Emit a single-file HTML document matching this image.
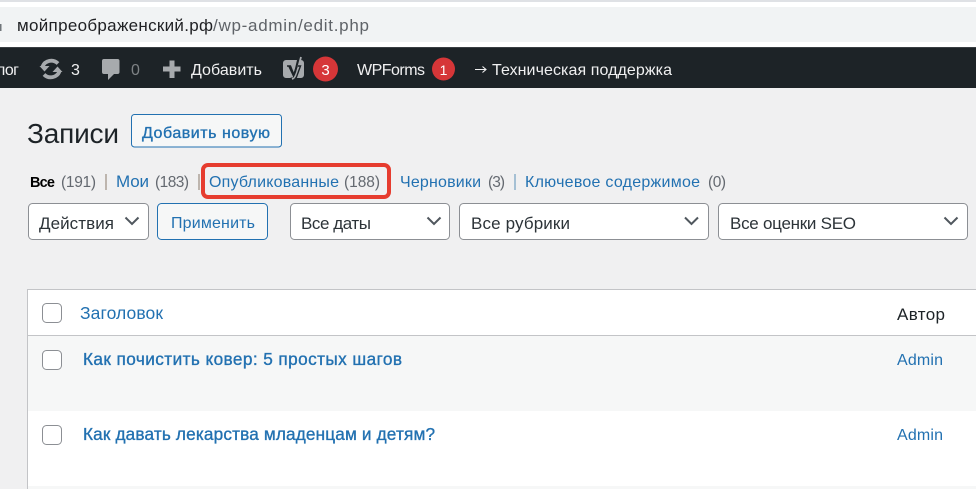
<!DOCTYPE html>
<html lang="ru"><head><meta charset="utf-8"><title>Записи</title>
<style>
html,body{margin:0;padding:0;width:976px;height:489px;overflow:hidden;background:#f0f0f1}
svg{display:block;position:absolute;left:0;top:0}
text{font-family:"Liberation Sans","DejaVu Sans",sans-serif;white-space:pre}
.bar{font-size:16px;fill:#f0f0f1}
.lnk{font-size:16px;fill:#2271b1}
.cnt{font-size:15.5px;fill:#646970}
.sel{font-size:17px;fill:#2c3338}
.ttl{font-size:17.2px;fill:#2271b1;stroke:#2271b1;stroke-width:.35}
</style></head><body>
<svg width="976" height="489" viewBox="0 0 976 489" xmlns="http://www.w3.org/2000/svg">
<rect width="976" height="489" fill="#f0f0f1"/>
<!-- browser chrome -->
<rect width="976" height="2" fill="#dfe1e5"/>
<rect y="2" width="976" height="45" fill="#fff"/>
<rect y="7" width="976" height="35" fill="#f1f3f4"/>
<rect x="-2" y="24" width="3.5" height="7" fill="#70757a"/>
<text x="17" y="31" font-size="17" fill="#202124" textLength="196">мойпреображенский.рф</text>
<text x="213" y="31" font-size="17" fill="#5f6368" textLength="156">/wp-admin/edit.php</text>
<!-- admin bar -->
<rect y="47" width="976" height="41" fill="#1d2327"/>
<rect y="47" width="976" height="1" fill="#3a3f43"/>
<text class="bar" x="-4" y="75" textLength="23">лог</text>
<g fill="none" stroke="#a7aaad" stroke-width="3.800">
<path d="M42.500 66.500A9.500 9.500 0 0 1 58 63.500"/><path d="M59.500 71.500A9.500 9.500 0 0 1 44 74.500"/>
</g>
<path d="M39.500 66h10l-5 5.500zM62.500 72h-10l5-5.500z" fill="#a7aaad"/>
<text class="bar" x="71" y="75" textLength="8">3</text>
<path d="M104 59h13.500a2 2 0 0 1 2 2v11a2 2 0 0 1-2 2h-3.500l-6 6v-6h-4a2 2 0 0 1-2-2V61a2 2 0 0 1 2-2z" fill="#a7aaad"/>
<text x="131" y="75" font-size="16" fill="#7e8285" textLength="9">0</text>
<path d="M163 66.500h6.500v-6h5v6h6v5h-6v6.500h-5v-6.500H163z" fill="#a7aaad"/>
<text class="bar" x="191" y="75" textLength="71">Добавить</text>
<path d="M286 60h11l-4 17-3 1h-4a3 3 0 0 1-3-3V63a3 3 0 0 1 3-3zM300 60h1a3 3 0 0 1 3 3v12a3 3 0 0 1-3 3h-7l3-4z" fill="#a7aaad"/>
<path d="M292 79c3-1 4-4 5-7l4-15" fill="none" stroke="#a7aaad" stroke-width="1.800"/>
<path d="M287 66h3.500l3.500 9M298 66h2.500l-4 11c-1 2-2 3-4 4" fill="none" stroke="#1d2327" stroke-width="1.400"/>
<path d="M289 66l4.500 9.500 3.500-9.500" fill="none" stroke="#1d2327" stroke-width="1.800"/>
<circle cx="325.500" cy="69" r="12.500" fill="#d63638"/>
<text x="325.500" y="75" font-size="15" fill="#fff" text-anchor="middle">3</text>
<text class="bar" x="357" y="75" textLength="68">WPForms</text>
<circle cx="443.500" cy="69" r="11.500" fill="#d63638"/>
<text x="443.500" y="75" font-size="14" fill="#fff" text-anchor="middle">1</text>
<path d="M475 69.500h11M482.500 66.500l3.500 3-3.500 3" fill="none" stroke="#f0f0f1" stroke-width="1.100"/>
<text class="bar" x="492" y="75" textLength="180">Техническая поддержка</text>
<!-- heading -->
<text x="27" y="143" font-size="28" fill="#1d2327" textLength="92">Записи</text>
<rect x="131.500" y="114.500" width="150" height="32.500" rx="3" fill="#f6f7f7" stroke="#2271b1"/>
<text x="142" y="138" font-size="16" fill="#2271b1" stroke="#2271b1" stroke-width=".35" textLength="128">Добавить новую</text>
<!-- subsub -->
<text x="30" y="187" font-size="14.500" font-weight="bold" fill="#000" textLength="25">Все</text>
<text class="cnt" x="61" y="187" textLength="35">(191)</text>
<rect x="105.500" y="174" width="1" height="16" fill="#8a7a6a"/>
<text x="116" y="187" font-size="17" fill="#2271b1" textLength="33">Мои</text>
<text class="cnt" x="155" y="187" textLength="34">(183)</text>
<rect x="198.500" y="174" width="1" height="16" fill="#8a7a6a"/>
<text class="lnk" x="209" y="187" textLength="130">Опубликованные</text>
<text class="cnt" x="344" y="187" textLength="36">(188)</text>
<rect x="203" y="165" width="186" height="32" rx="5" fill="none" stroke="#e63c2f" stroke-width="4"/>
<text class="lnk" x="400" y="187" textLength="81">Черновики</text>
<text class="cnt" x="488" y="187" textLength="17">(3)</text>
<rect x="514.500" y="174" width="1" height="16" fill="#5a8fb8"/>
<text class="lnk" x="525" y="187" textLength="175">Ключевое содержимое</text>
<text class="cnt" x="708" y="187" textLength="18">(0)</text>
<!-- filters -->
<g fill="#fff" stroke="#8c8f94">
<rect x="28.500" y="203.500" width="120" height="36" rx="4"/>
<rect x="290.500" y="203.500" width="159" height="36" rx="4"/>
<rect x="459.500" y="203.500" width="249" height="36" rx="4"/>
<rect x="718.500" y="203.500" width="249" height="36" rx="4"/>
</g>
<rect x="157.500" y="203.500" width="110" height="36" rx="4" fill="#f6f7f7" stroke="#2271b1"/>
<text class="sel" x="39" y="229" textLength="75">Действия</text>
<text x="171" y="228" font-size="16" fill="#2271b1" textLength="84">Применить</text>
<text class="sel" x="301" y="229" textLength="70">Все даты</text>
<text class="sel" x="471" y="229" textLength="99">Все рубрики</text>
<text class="sel" x="730" y="229" textLength="126">Все оценки SEO</text>
<g fill="none" stroke="#50575e" stroke-width="2">
<path d="M125.500 217.500l6.500 6.500 6.500-6.500"/>
<path d="M427.500 217.500l6.500 6.500 6.500-6.500"/>
<path d="M685 217.500l6.500 6.500 6.500-6.500"/>
<path d="M944.500 217.500l6.500 6.500 6.500-6.500"/>
</g>
<!-- table -->
<rect x="27" y="289" width="949" height="200" fill="#c3c4c7"/>
<rect x="28" y="290" width="948" height="45" fill="#fff"/>
<rect x="28" y="336" width="948" height="75" fill="#f6f7f7"/>
<rect x="28" y="411" width="948" height="75" fill="#fff"/>
<rect x="28" y="486" width="948" height="3" fill="#f6f7f7"/>
<g fill="#fff" stroke="#8c8f94">
<rect x="42.500" y="303.500" width="19" height="19" rx="4"/>
<rect x="42.500" y="350.500" width="19" height="19" rx="4"/>
<rect x="42.500" y="425.500" width="19" height="19" rx="4"/>
</g>
<text x="80" y="319" font-size="17.500" fill="#2271b1" textLength="83">Заголовок</text>
<text x="897" y="320" font-size="17" fill="#1d2327" textLength="48">Автор</text>
<text class="ttl" x="83" y="365" textLength="319">Как почистить ковер: 5 простых шагов</text>
<text class="ttl" x="83" y="440" textLength="352">Как давать лекарства младенцам и детям?</text>
<text x="897" y="365" font-size="16" fill="#2271b1" textLength="46">Admin</text>
<text x="897" y="440" font-size="16" fill="#2271b1" textLength="46">Admin</text>
</svg>
</body></html>
